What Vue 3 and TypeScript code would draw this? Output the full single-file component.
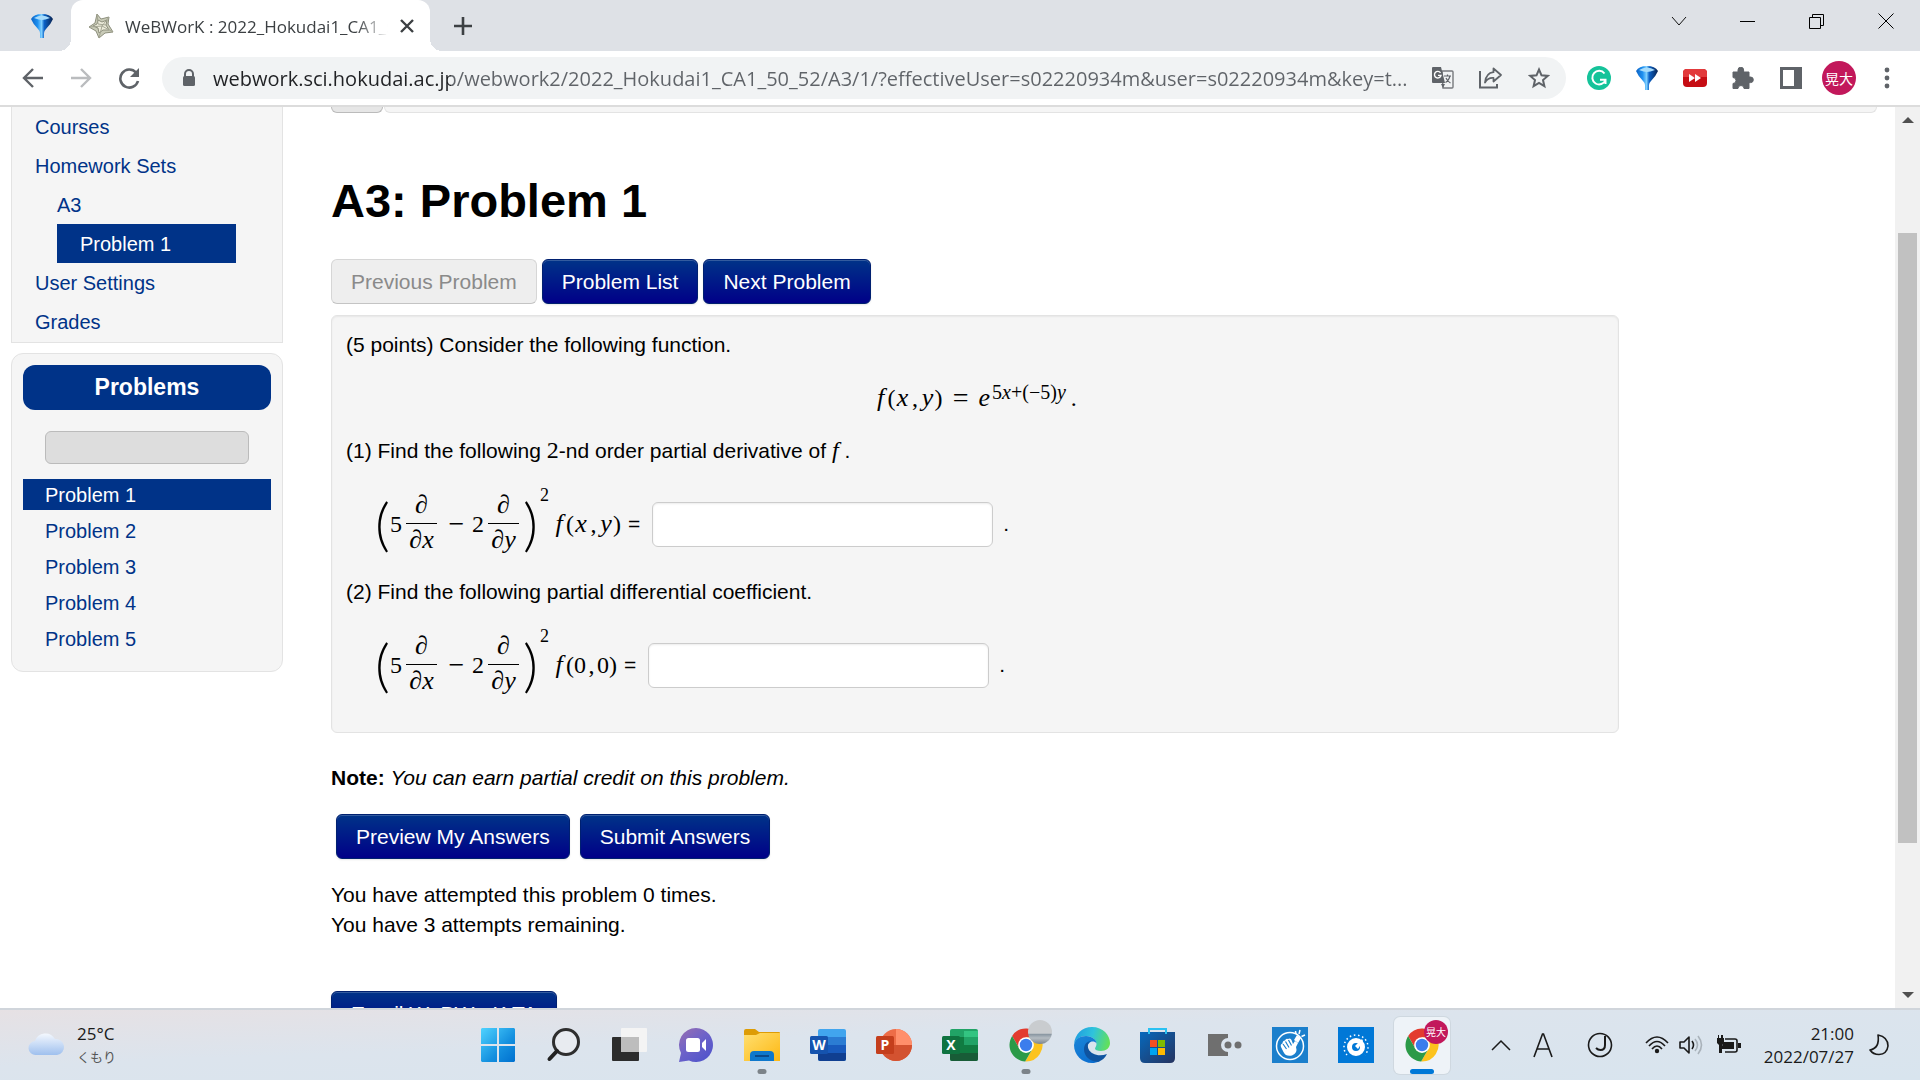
<script setup lang="ts">
import { ref } from 'vue'

interface NavItem {
  label: string
  level: number
  active?: boolean
}

const navItems: NavItem[] = [
  { label: 'Courses', level: 0 },
  { label: 'Homework Sets', level: 0 },
  { label: 'A3', level: 1 },
  { label: 'Problem 1', level: 2, active: true },
  { label: 'User Settings', level: 0 },
  { label: 'Grades', level: 0 },
]

const problems: string[] = ['Problem 1', 'Problem 2', 'Problem 3', 'Problem 4', 'Problem 5']
const currentProblem = 'Problem 1'

const address = ref(
  'webwork.sci.hokudai.ac.jp/webwork2/2022_Hokudai1_CA1_50_52/A3/1/?effectiveUser=s02220934m&user=s02220934m&key=t...',
)

interface Question {
  id: string
  args: [string, string]
  kind: 'var' | 'num'
}

const questions: Question[] = [
  { id: 'answer1', args: ['x', 'y'], kind: 'var' },
  { id: 'answer2', args: ['0', '0'], kind: 'num' },
]
const answers = ref<string[]>(['', ''])
</script>

<template>
  <div class="screen">
    <header class="tabstrip">
      <button class="pinned" aria-label="Pinned tab">
        <svg width="22" height="24" viewBox="0 0 22 24">
          <defs>
            <linearGradient id="funnel" x1="0" x2="1">
              <stop offset="0" stop-color="#0d62c4" /><stop offset=".3" stop-color="#1e90f0" />
              <stop offset=".48" stop-color="#7fd0ff" /><stop offset=".6" stop-color="#0b62c8" /><stop offset="1" stop-color="#0a2350" />
            </linearGradient>
          </defs>
          <path d="M0 5 Q3 0 11 0 Q19 0 22 5 Q20 10 15 15 Q13 17 13 19 V24 H9 V19 Q9 17 7 15 Q2 10 0 5Z" fill="url(#funnel)" />
          <path d="M3 4 Q11 -1 19 4 Q14 6 11 6 Q8 6 3 4Z" fill="#a8dcfb" />
        </svg>
      </button>
      <div class="tab">
        <svg class="tab-icon" width="26" height="26" viewBox="0 0 26 26">
          <path d="M9 1 L13 6 L21 4 L20 11 L25 19 L17 20 L11 25 L8 18 L1 14 L7 10Z" fill="#c9cbb8" stroke="#8d8f7c" />
          <path d="M10 7 L14 9 L19 7 L18 12 L21 17 L15 17 L11 20 L10 15 L5 13 L9 11Z" fill="#eeeddc" stroke="#8d8f7c" />
          <path d="M9 1 L10 11 L18 12 M25 19 L14 13 L11 25 M1 14 L14 13 L21 4" stroke="#a3a592" fill="none" />
        </svg>
        <span class="tab-title">WeBWorK : 2022_Hokudai1_CA1_50_52</span>
        <button class="tab-close" aria-label="Close tab">
          <svg width="14" height="14" viewBox="0 0 14 14"><path d="M1 1 L13 13 M13 1 L1 13" stroke="#3c4043" stroke-width="2.4" /></svg>
        </button>
      </div>
      <button class="new-tab" aria-label="New tab">
        <svg width="18" height="18" viewBox="0 0 18 18"><path d="M9 0 V18 M0 9 H18" stroke="#3c4043" stroke-width="2.6" /></svg>
      </button>
      <div class="window-controls">
        <button aria-label="Search tabs"><svg width="16" height="16" viewBox="0 0 16 16"><path d="M1 4 L8 12 L15 4" fill="none" stroke="#111" /></svg></button>
        <button aria-label="Minimize"><svg width="16" height="16" viewBox="0 0 16 16"><path d="M0 8.5 H15" stroke="#000" /></svg></button>
        <button aria-label="Restore"><svg width="16" height="16" viewBox="0 0 16 16"><path d="M.5 4.5 H11.5 V15.5 H.5Z M3.5 4 V1.5 H14.5 V12.5 H12" fill="none" stroke="#000" /></svg></button>
        <button aria-label="Close"><svg width="16" height="16" viewBox="0 0 16 16"><path d="M.5 .5 L15.5 15.5 M15.5 .5 L.5 15.5" stroke="#000" /></svg></button>
      </div>
    </header>

    <div class="toolbar">
      <button class="tool" aria-label="Back">
        <svg width="22" height="22" viewBox="0 0 22 22"><path d="M21 11 H2 M11 2 L2 11 L11 20" fill="none" stroke="#5f6368" stroke-width="2.4" /></svg>
      </button>
      <button class="tool" aria-label="Forward">
        <svg width="22" height="22" viewBox="0 0 22 22"><path d="M1 11 H20 M11 2 L20 11 L11 20" fill="none" stroke="#babcbe" stroke-width="2.4" /></svg>
      </button>
      <button class="tool" aria-label="Reload">
        <svg width="22" height="22" viewBox="0 0 22 22"><path d="M18 5.5 A9 9 0 1 0 20 14" fill="none" stroke="#5f6368" stroke-width="2.6" /><path d="M21 1 V10 H12Z" fill="#5f6368" /></svg>
      </button>
      <div class="omnibox">
        <svg class="lock" width="14" height="18" viewBox="0 0 14 18"><path d="M3 8 V5 A4 4 0 0 1 11 5 V8" fill="none" stroke="#5f6368" stroke-width="2" /><rect x="1" y="7" width="12" height="10" rx="1.5" fill="#5f6368" /></svg>
        <input v-model="address" class="url" type="text" aria-label="Address" />
        <button class="tool" aria-label="Translate">
          <svg width="22" height="22" viewBox="0 0 22 22">
            <path d="M10 4 H20 Q21 4 21 5 V20 Q21 21 20 21 H11Z" fill="none" stroke="#77797d" stroke-width="1.4" />
            <path d="M1 0 H9 L13 16 H1 Q0 16 0 15 V1 Q0 0 1 0Z M9 17 H13 L11 21Z" fill="#5f6368" />
            <path d="M8.5 5.8 A3.3 3.3 0 1 0 9 8.4 H6" fill="none" stroke="#fff" stroke-width="1.4" />
            <path d="M12 9 H19 M15.500 7.500 V9 M18 9 Q16.500 14 13.500 15.500 M14 11 Q15.500 14.500 18.500 16" fill="none" stroke="#5f6368" stroke-width="1.2" />
          </svg>
        </button>
        <button class="tool" aria-label="Share">
          <svg width="24" height="22" viewBox="0 0 24 22"><path d="M1 4 V20.500 H18 V17" fill="none" stroke="#5f6368" stroke-width="2" /><path d="M14.500 1.500 L22 8 L14.500 14.500 V11 Q9 10.500 6 15.500 Q7 6 14.500 5.200Z" fill="none" stroke="#5f6368" stroke-width="1.8" stroke-linejoin="round" /></svg>
        </button>
        <button class="tool" aria-label="Bookmark">
          <svg width="22" height="22" viewBox="0 0 22 22"><path d="M11 2.500 L13.500 8.300 L19.800 8.900 L15 13 L16.400 19.200 L11 16 L5.600 19.200 L7 13 L2.200 8.900 L8.500 8.300Z" fill="none" stroke="#5f6368" stroke-width="2" /></svg>
        </button>
      </div>
      <div class="extensions">
        <button class="tool" aria-label="Grammarly">
          <svg width="24" height="24" viewBox="0 0 24 24"><circle cx="12" cy="12" r="12" fill="#15c39a" /><path d="M17.500 7.500 A6.800 6.800 0 1 0 18.500 14 M13 13.800 H18.500 V18" fill="none" stroke="#fff" stroke-width="2" /></svg>
        </button>
        <button class="tool" aria-label="Downloader">
          <svg width="22" height="24" viewBox="0 0 22 24"><path d="M0 5 Q3 0 11 0 Q19 0 22 5 Q20 10 15 15 Q13 17 13 19 V24 H9 V19 Q9 17 7 15 Q2 10 0 5Z" fill="url(#funnel)" /><path d="M3 4 Q11 -1 19 4 Q14 6 11 6 Q8 6 3 4Z" fill="#a8dcfb" /></svg>
        </button>
        <button class="tool" aria-label="Video speed">
          <svg width="24" height="20" viewBox="0 0 24 20"><rect y="1" width="24" height="18" rx="4" fill="#c60d14" /><path d="M0 9 V5 Q0 1 4 1 H20 Q24 1 24 5 V9Z" fill="#e23a3c" /><path d="M6 6 L12 10 L6 14Z M12 6 L18 10 L12 14Z" fill="#fff" /></svg>
        </button>
        <button class="tool" aria-label="Extensions">
          <svg width="22" height="22" viewBox="0 0 22 22"><path d="M1 5 H6 V3 A2.800 2.800 0 0 1 11.600 3 V5 H17 V10 H18.500 A2.800 2.800 0 0 1 18.500 15.600 H17 V21.500 H12 A3 3 0 0 0 6 21.500 H1 V16.500 A3 3 0 0 0 1 10.500Z" fill="#5f6368" stroke="#5f6368" stroke-linejoin="round" /></svg>
        </button>
        <button class="tool" aria-label="Side panel">
          <svg width="22" height="22" viewBox="0 0 22 22"><path fill-rule="evenodd" d="M0 0 H22 V22 H0Z M3 3 V19 H14 V3Z" fill="#5f6368" /></svg>
        </button>
        <button class="tool" aria-label="Profile"><span class="avatar">晃大</span></button>
        <button class="tool" aria-label="Menu">
          <svg width="6" height="22" viewBox="0 0 6 22"><circle cx="3" cy="3" r="2.400" fill="#5f6368" /><circle cx="3" cy="11" r="2.400" fill="#5f6368" /><circle cx="3" cy="19" r="2.400" fill="#5f6368" /></svg>
        </button>
      </div>
    </div>

    <div class="viewport">
      <aside class="sidebar">
        <nav class="panel nav-panel">
          <a v-for="item in navItems" :key="item.label" href="#" :class="['nav-link', 'level-' + item.level, { active: item.active }]">{{ item.label }}</a>
        </nav>
        <nav class="panel problems-panel">
          <h2>Problems</h2>
          <div class="progress"></div>
          <a v-for="p in problems" :key="p" href="#" :class="['problem-link', { active: p === currentProblem }]">{{ p }}</a>
        </nav>
      </aside>

      <main class="content">
        <div class="crumbs"><span class="crumb-toggle"></span><span class="crumb-bar"></span></div>
        <h1>A3: Problem 1</h1>
        <div class="button-row">
          <button class="btn" disabled>Previous Problem</button>
          <button class="btn primary">Problem List</button>
          <button class="btn primary">Next Problem</button>
        </div>

        <section class="problem">
          <p>(5 points) Consider the following function.</p>
          <div class="display math">
            <i class="fn">f</i><span class="par">(</span><i class="var">x</i><span class="comma">,</span><i class="var">y</i><span class="par">)</span><span class="rel">=</span><i>e</i><sup class="power">5<i>x</i>+(−5)<i>y</i></sup><span>.</span>
          </div>
          <template v-for="(q, i) in questions" :key="q.id">
            <p v-if="i === 0">(1) Find the following <span class="inline-math">2</span>-nd order partial derivative of <i class="inline-math">f</i> .</p>
            <p v-else>(2) Find the following partial differential coefficient.</p>
            <div class="formula">
              <label :for="q.id" class="math">
                <span class="big-paren open">(</span>
                <span class="num">5</span>
                <span class="frac"><span>∂</span><span>∂<i>x</i></span></span>
                <span class="minus">−</span>
                <span class="num">2</span>
                <span class="frac"><span>∂</span><span>∂<i>y</i></span></span>
                <span class="big-paren">)</span>
                <span class="square">2</span>
                <i class="fn">f</i><span class="par">(</span><span :class="q.kind">{{ q.args[0] }}</span><span class="comma">,</span><span :class="q.kind">{{ q.args[1] }}</span><span class="par">)</span>
                <span class="equals">=</span>
              </label>
              <input :id="q.id" v-model="answers[i]" type="text" class="answer" />
              <span>.</span>
            </div>
          </template>
        </section>

        <p class="note"><b>Note:</b> <i>You can earn partial credit on this problem.</i></p>
        <div class="button-row submit-row">
          <button class="btn primary">Preview My Answers</button>
          <button class="btn primary">Submit Answers</button>
        </div>
        <p class="attempts">You have attempted this problem 0 times.<br />You have 3 attempts remaining.</p>
        <div class="button-row"><button class="btn primary">Email WeBWorK TA</button></div>
      </main>

      <div class="scrollbar">
        <svg width="12" height="6" viewBox="0 0 12 6"><path d="M0 6 L6 0 L12 6Z" fill="#505050" /></svg>
        <div class="track"><div class="thumb"></div></div>
        <svg width="12" height="6" viewBox="0 0 12 6"><path d="M0 0 L6 6 L12 0Z" fill="#505050" /></svg>
      </div>
    </div>

    <footer class="taskbar">
      <div class="weather">
        <svg width="38" height="26" viewBox="0 0 38 26">
          <defs><linearGradient id="cloud" x1="0" x2="0" y1="0" y2="1"><stop offset="0" stop-color="#f4f8fe" /><stop offset="1" stop-color="#9fc0ee" /></linearGradient></defs>
          <path d="M8 23 A7 7 0 0 1 7 9 A11 11 0 0 1 27 7 A8 8 0 0 1 29 23Z" fill="url(#cloud)" />
        </svg>
        <div><div>25°C</div><div class="jp">くもり</div></div>
      </div>

      <div class="apps">
        <button class="app" aria-label="Start">
          <svg width="36" height="36" viewBox="0 0 36 36">
            <defs><linearGradient id="win" x1="0" y1="0" x2="1" y2="1"><stop offset="0" stop-color="#4fd3ff" /><stop offset=".6" stop-color="#1490df" /><stop offset="1" stop-color="#0070cf" /></linearGradient></defs>
            <path d="M2 1 H17 V17 H1 V2Z M19 1 H34 L35 2 V17 H19Z M1 19 H17 V35 H2 L1 34Z M19 19 H35 V34 L34 35 H19Z" fill="url(#win)" />
          </svg>
        </button>
        <button class="app" aria-label="Search">
          <svg width="36" height="36" viewBox="0 0 36 36"><circle cx="20" cy="15" r="12.500" fill="#e8ebf0" stroke="#2e2e2e" stroke-width="3" /><path d="M11 24 L3.500 32" stroke="#222" stroke-width="4" stroke-linecap="round" /></svg>
        </button>
        <button class="app" aria-label="Task view">
          <svg width="36" height="36" viewBox="0 0 36 36"><rect x="0" y="10" width="27" height="24" rx="1" fill="#2c2c2c" /><rect x="9" y="1" width="26" height="24" rx="1" fill="#f4f4f4" /><path d="M9 10 H27 V25 H9Z" fill="#bdbdbd" /></svg>
        </button>
        <button class="app" aria-label="Chat">
          <svg width="36" height="36" viewBox="0 0 36 36">
            <defs><linearGradient id="chat" x1="0" y1="0" x2=".8" y2="1"><stop offset="0" stop-color="#9a6fb0" /><stop offset=".5" stop-color="#6d62c9" /><stop offset="1" stop-color="#4f54cb" /></linearGradient></defs>
            <path d="M18 1 A17 17 0 1 1 11 33.500 L1 35 L3 26 A17 17 0 0 1 18 1Z" fill="url(#chat)" />
            <rect x="8" y="11" width="14" height="14" rx="2.500" fill="#fff" /><path d="M24 16 L28 12 V24 L24 20Z" fill="#fff" />
          </svg>
        </button>
        <button class="app running" aria-label="Explorer">
          <svg width="36" height="36" viewBox="0 0 36 36">
            <defs><linearGradient id="folder" x1="0" y1="0" x2="1" y2="1"><stop offset="0" stop-color="#ffdf70" /><stop offset="1" stop-color="#fdb813" /></linearGradient></defs>
            <path d="M0 4 Q0 2 2 2 H11 L15 5 H35 Q36 5 36 6 V12 H0Z" fill="#dd9c05" /><path d="M0 8 H12 L16 6 H36 V34 H0Z" fill="url(#folder)" />
            <path d="M6 34 V28 Q6 24 10 24 H26 Q30 24 30 28 V34Z" fill="#0f78cc" /><path d="M11 29 H25" stroke="#0a4a8c" stroke-width="2" />
          </svg>
        </button>
        <button class="app" aria-label="Word">
          <svg width="36" height="36" viewBox="0 0 36 36">
            <rect x="8" y="2" width="28" height="32" rx="2" fill="#41a5ee" /><path d="M8 10 H36 V18 H8Z" fill="#2b7cd3" /><path d="M8 18 H36 V26 H8Z" fill="#185abd" /><path d="M8 26 H36 V32 Q36 34 34 34 H10 Q8 34 8 32Z" fill="#103f91" />
            <rect x="0" y="9" width="18" height="18" rx="1.500" fill="#1553ae" /><text x="9" y="23" text-anchor="middle" class="badge-letter">W</text>
          </svg>
        </button>
        <button class="app" aria-label="PowerPoint">
          <svg width="36" height="36" viewBox="0 0 36 36">
            <circle cx="20" cy="18" r="16" fill="#ed6c47" /><path d="M20 2 A16 16 0 0 1 36 18 H20Z" fill="#ff8f6b" /><path d="M4 18 H36 A16 16 0 0 1 4 18Z" fill="#d35230" />
            <rect x="0" y="9" width="18" height="18" rx="1.500" fill="#c43e1c" /><text x="9" y="23" text-anchor="middle" class="badge-letter">P</text>
          </svg>
        </button>
        <button class="app" aria-label="Excel">
          <svg width="36" height="36" viewBox="0 0 36 36">
            <rect x="8" y="2" width="28" height="32" rx="2" fill="#21a366" /><path d="M22 4 H36 V10 H22Z" fill="#33c481" /><path d="M8 10 H22 V26 H8Z" fill="#107c41" /><path d="M22 18 H36 V26 H22Z" fill="#107c41" /><path d="M8 26 H36 V32 Q36 34 34 34 H10 Q8 34 8 32Z" fill="#185c37" />
            <rect x="0" y="9" width="18" height="18" rx="1.500" fill="#0f7340" /><text x="9" y="23" text-anchor="middle" class="badge-letter">X</text>
          </svg>
        </button>
        <button class="app running" aria-label="Chrome">
          <svg width="36" height="36" viewBox="0 0 48 48">
            <path d="M5.540 12.030 A22 22 0 0 1 43.600 14 L24 14 L15.340 29Z" fill="#e33b2e" /><path d="M43.600 14 A22 22 0 0 1 22.860 45.970 L32.660 29 L24 14Z" fill="#fcc31e" /><path d="M22.860 45.970 A22 22 0 0 1 5.540 12.030 L15.340 29 L32.660 29Z" fill="#2b9a48" />
            <circle cx="24" cy="24" r="10.500" fill="#fff" /><circle cx="24" cy="24" r="8.300" fill="#3b7ded" />
          </svg>
          <span class="app-badge photo"></span>
        </button>
        <button class="app" aria-label="Edge">
          <svg width="36" height="36" viewBox="0 0 36 36">
            <defs>
              <linearGradient id="edge-a" x1="0" y1=".3" x2="1" y2=".5"><stop offset="0" stop-color="#1f9de0" /><stop offset=".5" stop-color="#2fc3dc" /><stop offset="1" stop-color="#62e05a" /></linearGradient>
              <linearGradient id="edge-b" x1="0" y1="0" x2=".6" y2="1"><stop offset="0" stop-color="#1b86d8" /><stop offset="1" stop-color="#0c6fd0" /></linearGradient>
            </defs>
            <path d="M0 17 C1 7 8 0 18 0 C29 0 36 8 36 16 C36 21 32 24 27 24 C23 24 21 23 21 21.500 C21 20.500 22.500 19.500 22.500 17 C22.500 13 18 9 12 9 C6 9 2 12 0 17Z" fill="url(#edge-a)" />
            <path d="M0 18 C1 12 6 9 12 9 C18 9 22.500 13 22.500 16.500 C20 13 14 14.500 13.500 20 C13 28 19 33 26 34 C23 35.500 20.500 36 18 36 C8 36 0 28 0 18Z" fill="url(#edge-b)" />
            <path d="M18 13.800 C13.500 15 13.200 19 14.500 22 C17 27.500 25 30 33 27 C31 31 28 33.500 24.500 34.700 C16 35 10 29 10 22.500 C10 17 13.500 14 18 13.800Z" fill="#0f54a0" />
          </svg>
        </button>
        <button class="app" aria-label="Store">
          <svg width="36" height="36" viewBox="0 0 36 36">
            <defs><linearGradient id="store" x1="0" y1="0" x2="1" y2="1"><stop offset="0" stop-color="#0669bd" /><stop offset="1" stop-color="#26335f" /></linearGradient></defs>
            <path d="M0 5 H35 V31 Q35 36 30 36 H5 Q0 36 0 31Z" fill="url(#store)" /><path d="M9 7 V2 H26 V7" fill="none" stroke="#2ac1f2" stroke-width="2" />
            <path d="M10 13 H17 V20 H10Z" fill="#f25022" /><path d="M18 13 H25 V20 H18Z" fill="#7fba00" /><path d="M10 21 H17 V28 H10Z" fill="#00a4ef" /><path d="M18 21 H25 V28 H18Z" fill="#ffb900" />
          </svg>
        </button>
        <button class="app" aria-label="Connector">
          <svg width="36" height="36" viewBox="0 0 36 36"><path d="M2 7 H22 V11 A7 7 0 0 0 22 25 V29 H2Z" fill="#6f6f6f" /><circle cx="22" cy="18" r="3.500" fill="#6f6f6f" /><circle cx="32" cy="18" r="3.500" fill="#6f6f6f" /></svg>
        </button>
        <button class="app" aria-label="Hand tool">
          <svg width="36" height="36" viewBox="0 0 36 36"><rect width="36" height="36" fill="#1b7fcc" /><circle cx="18" cy="19" r="13.500" fill="none" stroke="#fff" stroke-width="1.500" /><path d="M22 13 L25 8 L29 11 L26 16Z" fill="#fff" /><path d="M9 20 Q8 17 10.500 16.500 Q10.500 13.500 13 13.500 Q14 11 16 12 Q18.500 10.500 19.500 13 L21 17 L23 14 L26 16 L24 20 Q26 26 20 28.500 Q14 30 11.500 25Z" fill="#fff" /><path d="M11 17 L14.500 22 M13.500 14.500 L17 20.500 M16.500 13 L19.500 18.500" stroke="#1b7fcc" stroke-width="1.200" /><path d="M24 7 L23.500 4 M27 7 L28 3 M29.500 9.500 L33 8" stroke="#fff" stroke-width="1.500" /></svg>
        </button>
        <button class="app" aria-label="Dial">
          <svg width="36" height="36" viewBox="0 0 36 36"><rect width="36" height="36" fill="#0078d7" /><circle cx="18" cy="20" r="6.500" fill="none" stroke="#fff" stroke-width="5" /><path d="M17 19 L24 12 L25 14 L20 22Z" fill="#fff" /><path d="M9 28 A12 12 0 1 1 27 28" fill="none" stroke="#fff" stroke-width="1.500" stroke-dasharray="1.500 2.700" /></svg>
        </button>
        <button class="app running current" aria-label="Chrome, current window">
          <svg width="36" height="36" viewBox="0 0 48 48">
            <path d="M5.540 12.030 A22 22 0 0 1 43.600 14 L24 14 L15.340 29Z" fill="#e33b2e" /><path d="M43.600 14 A22 22 0 0 1 22.860 45.970 L32.660 29 L24 14Z" fill="#fcc31e" /><path d="M22.860 45.970 A22 22 0 0 1 5.540 12.030 L15.340 29 L32.660 29Z" fill="#2b9a48" />
            <circle cx="24" cy="24" r="10.500" fill="#fff" /><circle cx="24" cy="24" r="8.300" fill="#3b7ded" />
          </svg>
          <span class="app-badge">晃大</span>
        </button>
      </div>

      <div class="tray">
        <svg width="20" height="12" viewBox="0 0 20 12"><path d="M1 11 L10 2 L19 11" fill="none" stroke="#1a1a1a" stroke-width="1.500" /></svg>
        <svg class="ime" width="20" height="26" viewBox="0 0 20 26"><path d="M1 25 L9.500 2 H10.500 L19 25 M4 17 H16" fill="none" stroke="#1a1a1a" stroke-width="1.600" /></svg>
        <svg class="mode" width="26" height="26" viewBox="0 0 26 26"><circle cx="13" cy="13" r="11.500" fill="none" stroke="#1a1a1a" stroke-width="1.600" /><path d="M18 4 V13 Q18 18 13.500 18 Q11 18 9 16" fill="none" stroke="#1a1a1a" stroke-width="2" /></svg>
        <svg width="24" height="20" viewBox="0 0 24 20"><g fill="none" stroke="#1a1a1a" stroke-width="1.600"><path d="M1 8 Q12 -4 23 8" /><path d="M4 11 Q12 2 20 11" /><path d="M7 14 Q12 8 17 14" /></g><circle cx="12" cy="16" r="2.200" fill="#1a1a1a" /></svg>
        <svg width="26" height="20" viewBox="0 0 26 20"><path d="M1 7 H5 L10 2 V18 L5 13 H1Z" fill="none" stroke="#1a1a1a" stroke-width="1.600" stroke-linejoin="round" /><path d="M13 6 Q16 10 13 14" fill="none" stroke="#1a1a1a" stroke-width="1.600" /><path d="M16 4 Q21 10 16 16 M19 1 Q26 10 19 19" fill="none" stroke="#a9b2ba" stroke-width="1.600" /></svg>
        <svg class="battery" width="26" height="20" viewBox="0 0 26 20"><path d="M9 4 H19 Q21 4 21 6 V15 Q21 17 19 17 H9" fill="none" stroke="#1a1a1a" stroke-width="1.600" /><path d="M22 8 H25 V13 H22Z M8 7 H18 V14 H6 V11Z M1 3 H8 V8 L6 10 V18 H3 V10 L1 8Z M2 0 H3 V3 H2Z M5 0 H7 V3 H5Z" fill="#1a1a1a" /></svg>
        <div class="clock"><div>21:00</div><div>2022/07/27</div></div>
        <svg width="22" height="22" viewBox="0 0 22 22"><path d="M10 1 Q20 3 20 12 Q19 20 11 20.500 Q5 20.500 2 16 Q12 14 10 1Z" fill="none" stroke="#1a1a1a" stroke-width="1.600" stroke-linejoin="round" /></svg>
      </div>
    </footer>
  </div>
</template>

<style>
body {
  margin: 0;
}
</style>

<style scoped>
.screen {
  display: flex;
  flex-direction: column;
  height: 100vh;
  overflow: hidden;
  background: #fff;
  color: #000;
  font-family: "Liberation Sans", Arial, sans-serif;
  font-size: 21px;
  line-height: 30px;
}
button {
  margin: 0;
  padding: 0;
  border: 0;
  background: none;
  font: inherit;
  color: inherit;
}
svg {
  display: block;
  flex: none;
}
p, h1, h2 {
  margin: 0;
}
a {
  text-decoration: none;
}

/* Tab strip */
.tabstrip {
  display: flex;
  flex: none;
  height: 51px;
  background: #dee1e6;
}
.pinned {
  display: flex;
  align-items: center;
  justify-content: flex-end;
  width: 53px;
  margin-right: 18px;
}
.tab {
  position: relative;
  display: flex;
  align-items: center;
  box-sizing: border-box;
  width: 359px;
  padding: 0 16px 0 17px;
  border-radius: 12px 12px 0 0;
  background: #fff;
}
.tab::before,
.tab::after {
  content: "";
  position: absolute;
  bottom: 0;
  width: 12px;
  height: 12px;
}
.tab::before {
  left: -12px;
  background: radial-gradient(circle at 0 0, #dee1e6 12px, #fff 12px);
}
.tab::after {
  right: -12px;
  background: radial-gradient(circle at 100% 0, #dee1e6 12px, #fff 12px);
}
.tab-title {
  flex: 1;
  margin: 0 12px 0 11px;
  padding-top: 2px;
  overflow: hidden;
  white-space: nowrap;
  font-family: "Open Sans", sans-serif;
  font-size: 17px;
  color: #3c4043;
  mask-image: linear-gradient(to right, #000 88%, transparent);
}
.new-tab {
  margin-left: 24px;
}
.window-controls {
  display: flex;
  margin-left: auto;
  height: 42px;
}
.window-controls button {
  display: flex;
  align-items: center;
  justify-content: center;
  width: 69px;
}

/* Toolbar */
.toolbar {
  display: flex;
  align-items: center;
  flex: none;
  height: 54px;
  padding-left: 9px;
  border-bottom: 2px solid #dcdcdc;
}
.tool {
  display: flex;
  align-items: center;
  justify-content: center;
  flex: none;
  width: 48px;
  height: 42px;
}
.omnibox {
  display: flex;
  align-items: center;
  flex: 1;
  min-width: 0;
  height: 42px;
  margin-left: 9px;
  padding: 0 3px 0 20px;
  border-radius: 21px;
  background: #f1f3f4;
}
.url {
  flex: 1;
  min-width: 0;
  margin: 0 8px 0 17px;
  padding: 2px 0 0;
  border: 0;
  outline: 0;
  background: linear-gradient(to right, #202124 238px, #5f6368 238px);
  background-clip: text;
  color: transparent;
  font-family: "Open Sans", sans-serif;
  font-size: 20px;
  line-height: 40px;
}
.extensions {
  display: flex;
  margin: 0 9px;
}
.avatar {
  width: 34px;
  height: 34px;
  border-radius: 50%;
  background: #c2185b;
  color: #fff;
  font-family: "Noto Sans CJK JP", sans-serif;
  font-size: 14px;
  line-height: 34px;
  text-align: center;
}

/* Page */
.viewport {
  display: flex;
  flex: 1;
  min-height: 0;
  overflow: hidden;
}
.sidebar {
  flex: none;
  width: 272px;
  margin: 0 48px 0 11px;
  font-size: 20px;
}
.panel {
  display: flex;
  flex-direction: column;
  box-sizing: border-box;
  border: 1px solid #e3e3e3;
  background: #f5f5f5;
}
.panel a {
  color: #038;
}
.panel a.active {
  background: #038;
  color: #fff;
}
.nav-panel {
  height: 236px;
  border-top: 0;
}
.nav-link {
  padding: 2px 0 0 23px;
  line-height: 37px;
}
.nav-link.level-1 {
  padding-left: 45px;
}
.nav-link.level-2 {
  margin: 0 46px 0 45px;
}
.problems-panel {
  margin-top: 10px;
  padding: 11px 11px 12px;
  border-radius: 12px;
}
.problems-panel h2 {
  border-radius: 12px;
  background: #038;
  color: #fff;
  font-size: 23px;
  line-height: 45px;
  text-align: center;
}
.progress {
  height: 31px;
  margin: 21px 22px 15px;
  border: 1px solid #bbb;
  border-radius: 6px;
  background: #ddd;
}
.problem-link {
  margin-bottom: 5px;
  padding: 1px 0 0 22px;
  line-height: 30px;
}
.content {
  flex: 1;
  min-width: 0;
  padding-right: 18px;
}
.crumbs {
  display: flex;
  gap: 1px;
  height: 6px;
}
.crumb-toggle {
  box-sizing: border-box;
  width: 52px;
  border: 1px solid #bbb;
  border-top: 0;
  border-radius: 0 0 6px 6px;
  background: #e6e6e6;
}
.crumb-bar {
  box-sizing: border-box;
  flex: 1;
  border: 1px solid #e3e3e3;
  border-top: 0;
  border-radius: 0 0 6px 6px;
  background: #f5f5f5;
}
h1 {
  margin: 60px 0 30px;
  font-size: 47px;
  line-height: 56px;
}
.button-row {
  display: flex;
  gap: 5px;
}
.btn {
  box-sizing: border-box;
  height: 45px;
  padding: 0 19px;
  border: 1px solid #d6d6d6;
  border-bottom-color: #c4c4c4;
  border-radius: 6px;
  background: #eee;
  color: #8a8a8a;
}
.btn.primary {
  border-color: #002070;
  background: linear-gradient(#038, #008);
  box-shadow: inset 0 1px 0 rgba(255, 255, 255, .2), 0 1px 2px rgba(0, 0, 0, .1);
  color: #fff;
}
.problem {
  box-sizing: border-box;
  width: calc(100% * 10 / 12);
  margin-top: 11px;
  padding: 14px;
  border: 1px solid #e3e3e3;
  border-radius: 6px;
  background: #f5f5f5;
  box-shadow: inset 0 1px 2px rgba(0, 0, 0, .06);
}
.math,
.inline-math {
  font-family: "Liberation Serif", "Times New Roman", serif;
  font-size: 24px;
}
.inline-math {
  line-height: 24px;
}
.math > i,
.math .var,
.frac {
  font-size: 26px;
}
.display {
  display: flex;
  justify-content: center;
  height: 46px;
  margin: 15px 0;
  line-height: 46px;
}
.fn,
.var,
.num,
.par {
  text-align: center;
}
.fn {
  width: 14px;
}
.par {
  width: 8px;
}
.var {
  width: 14px;
  font-style: italic;
}
.num {
  width: 12px;
}
.comma {
  width: 11px;
  text-align: center;
}
.rel {
  width: 36px;
  font-size: 28px;
  text-align: center;
}
.power {
  padding: 0 5px 0 2px;
  font-size: 20px;
  line-height: 34px;
}
.formula {
  display: flex;
  align-items: center;
  height: 86px;
  margin: 15px 0 10px;
  padding-left: 30px;
}
.formula .math {
  display: flex;
  align-items: center;
  align-self: stretch;
}
.big-paren {
  display: flex;
  width: 14px;
  padding-bottom: 2px;
  font-family: Lato, sans-serif;
  font-size: 58px;
  font-weight: 300;
  line-height: 60px;
}
.big-paren.open {
  justify-content: flex-end;
}
.frac {
  width: 31px;
  margin: 0 4px;
  text-align: center;
}
.frac span {
  display: block;
  padding: 2px 0 3px;
  line-height: 28px;
}
.frac span:first-child {
  padding: 0 0 4px;
  border-bottom: 1px solid #000;
}
.minus {
  width: 31px;
  font-size: 28px;
  text-align: center;
}
.square {
  align-self: flex-start;
  width: 15px;
  text-align: center;
  font-size: 18px;
  line-height: 28px;
}
.equals {
  margin-left: 7px;
  font-family: "Liberation Sans", Arial, sans-serif;
  font-size: 21px;
}
.answer {
  box-sizing: border-box;
  width: 341px;
  height: 45px;
  margin: 0 10px 0 12px;
  border: 1px solid #ccc;
  border-radius: 6px;
  background: #fff;
  box-shadow: inset 0 1px 2px rgba(0, 0, 0, .08);
  font: inherit;
}
.note {
  margin-top: 30px;
}
.submit-row {
  gap: 10px;
  margin: 21px 5px;
}
.attempts {
  margin-bottom: 51px;
}
.scrollbar {
  display: flex;
  flex-direction: column;
  align-items: center;
  flex: none;
  box-sizing: border-box;
  width: 25px;
  padding: 10px 0;
  background: #f1f1f1;
}
.track {
  flex: 1;
  width: 19px;
  padding: 110px 0 149px;
}
.thumb {
  height: 100%;
  background: #c1c1c1;
}

/* Taskbar */
.taskbar {
  display: grid;
  grid-template-columns: 1fr auto 1fr;
  align-items: center;
  flex: none;
  box-sizing: border-box;
  height: 72px;
  border-top: 2px solid #d0d5db;
  background: linear-gradient(to bottom right, #e6e1e4, #dce4ed 40%, #d8e4ee);
  color: #1a1a1a;
  font-family: "Open Sans", "Noto Sans CJK JP", sans-serif;
  font-size: 17px;
  line-height: 23px;
}
.weather {
  display: flex;
  align-items: center;
  gap: 11px;
  padding-left: 28px;
}
.jp {
  font-family: "Noto Sans CJK JP", sans-serif;
  font-size: 13px;
  color: #555;
}
.apps {
  display: flex;
}
.app {
  position: relative;
  display: flex;
  align-items: center;
  justify-content: center;
  width: 56px;
  height: 57px;
  margin: 0 5px;
  border-radius: 6px;
}
.app.current {
  background: #eef3f8;
  box-shadow: 0 0 0 1px #cfd8e0;
}
.app.running::after {
  content: "";
  position: absolute;
  bottom: 0;
  left: 50%;
  width: 9px;
  height: 5px;
  border-radius: 3px;
  background: #7c8389;
  transform: translateX(-50%);
}
.app.current::after {
  width: 24px;
  background: #0078d7;
}
.app-badge {
  position: absolute;
  top: 3px;
  right: 2px;
  width: 24px;
  height: 24px;
  border-radius: 50%;
  background: #c2185b;
  color: #fff;
  font-family: "Noto Sans CJK JP", sans-serif;
  font-size: 10px;
  line-height: 24px;
  text-align: center;
}
.app-badge.photo {
  background: linear-gradient(#c9cccf 55%, #8b98a3 60%, #b5bcc2 75%, #7d868e);
}
.badge-letter {
  fill: #fff;
  font-family: "Open Sans", sans-serif;
  font-size: 14px;
  font-weight: 700;
}
.tray {
  display: flex;
  align-items: center;
  justify-content: flex-end;
  padding-right: 30px;
}
.ime {
  margin-left: 22px;
}
.mode {
  margin: 0 32px 0 34px;
}
.tray .mode + svg {
  margin-right: 10px;
}
.battery {
  margin: 0 22px 0 11px;
}
.clock {
  margin-right: 14px;
  text-align: right;
}
</style>
